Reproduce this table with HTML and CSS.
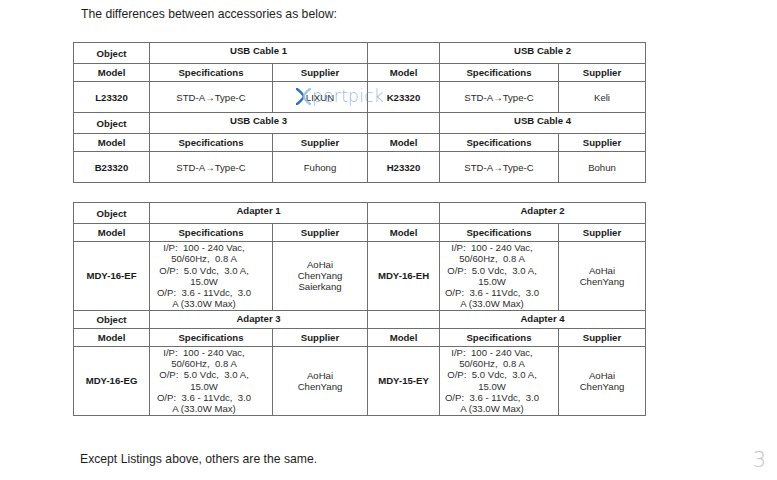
FILE: index.html
```html
<!DOCTYPE html>
<html lang="en">
<head>
<meta charset="utf-8">
<title>Accessories differences</title>
<link rel="stylesheet" href="styles.css">
</head>
<body>
<div class="page">
  <p class="title">The differences between accessories as below:</p>

  <table class="grid cables">
    <colgroup>
      <col class="c1"><col class="c2"><col class="c3"><col class="c4"><col class="c5"><col class="c6">
    </colgroup>
    <tr class="r-obj">
      <td class="b">Object</td><td class="b name" colspan="2">USB Cable 1</td><td></td><td class="b name" colspan="2">USB Cable 2</td>
    </tr>
    <tr class="r-head">
      <td class="b">Model</td><td class="b">Specifications</td><td class="b">Supplier</td><td class="b">Model</td><td class="b">Specifications</td><td class="b">Supplier</td>
    </tr>
    <tr class="r-data">
      <td class="b">L23320</td><td>STD-A→Type-C</td><td>LIXUN</td><td class="b">K23320</td><td>STD-A→Type-C</td><td>Keli</td>
    </tr>
    <tr class="r-obj">
      <td class="b">Object</td><td class="b name" colspan="2">USB Cable 3</td><td></td><td class="b name" colspan="2">USB Cable 4</td>
    </tr>
    <tr class="r-head">
      <td class="b">Model</td><td class="b">Specifications</td><td class="b">Supplier</td><td class="b">Model</td><td class="b">Specifications</td><td class="b">Supplier</td>
    </tr>
    <tr class="r-data">
      <td class="b">B23320</td><td>STD-A→Type-C</td><td>Fuhong</td><td class="b">H23320</td><td>STD-A→Type-C</td><td>Bohun</td>
    </tr>
  </table>

  <table class="grid adapters">
    <colgroup>
      <col class="c1"><col class="c2"><col class="c3"><col class="c4"><col class="c5"><col class="c6">
    </colgroup>
    <tr class="r-obj">
      <td class="b">Object</td><td class="b name" colspan="2">Adapter 1</td><td></td><td class="b name" colspan="2">Adapter 2</td>
    </tr>
    <tr class="r-head">
      <td class="b">Model</td><td class="b">Specifications</td><td class="b">Supplier</td><td class="b">Model</td><td class="b">Specifications</td><td class="b">Supplier</td>
    </tr>
    <tr class="r-spec">
      <td class="b">MDY-16-EF</td>
      <td class="spec">I/P:&nbsp; 100 - 240 Vac,<br>50/60Hz,&nbsp; 0.8 A<br>O/P:&nbsp; 5.0 Vdc,&nbsp; 3.0 A,<br>15.0W<br>O/P:&nbsp; 3.6 - 11Vdc,&nbsp; 3.0<br>A (33.0W Max)</td>
      <td>AoHai<br>ChenYang<br>Saierkang</td>
      <td class="b">MDY-16-EH</td>
      <td class="spec">I/P:&nbsp; 100 - 240 Vac,<br>50/60Hz,&nbsp; 0.8 A<br>O/P:&nbsp; 5.0 Vdc,&nbsp; 3.0 A,<br>15.0W<br>O/P:&nbsp; 3.6 - 11Vdc,&nbsp; 3.0<br>A (33.0W Max)</td>
      <td>AoHai<br>ChenYang</td>
    </tr>
    <tr class="r-obj2">
      <td class="b">Object</td><td class="b name" colspan="2">Adapter 3</td><td></td><td class="b name" colspan="2">Adapter 4</td>
    </tr>
    <tr class="r-head">
      <td class="b">Model</td><td class="b">Specifications</td><td class="b">Supplier</td><td class="b">Model</td><td class="b">Specifications</td><td class="b">Supplier</td>
    </tr>
    <tr class="r-spec2">
      <td class="b">MDY-16-EG</td>
      <td class="spec">I/P:&nbsp; 100 - 240 Vac,<br>50/60Hz,&nbsp; 0.8 A<br>O/P:&nbsp; 5.0 Vdc,&nbsp; 3.0 A,<br>15.0W<br>O/P:&nbsp; 3.6 - 11Vdc,&nbsp; 3.0<br>A (33.0W Max)</td>
      <td>AoHai<br>ChenYang</td>
      <td class="b">MDY-15-EY</td>
      <td class="spec">I/P:&nbsp; 100 - 240 Vac,<br>50/60Hz,&nbsp; 0.8 A<br>O/P:&nbsp; 5.0 Vdc,&nbsp; 3.0 A,<br>15.0W<br>O/P:&nbsp; 3.6 - 11Vdc,&nbsp; 3.0<br>A (33.0W Max)</td>
      <td>AoHai<br>ChenYang</td>
    </tr>
  </table>

  <div class="footer">
    <p class="note">Except Listings above, others are the same.</p>
    <span class="pageno">3</span>
  </div>

  <div class="watermark">
    <svg class="wm-logo" width="15" height="17" viewBox="0 0 15 17">
      <path d="M1 1 C5 4 7 6 7.5 8.5 C7 11 5 13 1 16" fill="none" stroke="#2f6fb6" stroke-width="2.4" stroke-linecap="round"/>
      <path d="M14 1 C10 4 8 6 7.5 8.5 C8 11 10 13 14 16" fill="none" stroke="#8fc0ea" stroke-width="2.4" stroke-linecap="round" opacity="0.85"/>
    </svg>
    <span class="wm-text">pertpick</span>
  </div>
</div>
</body>
</html>
```

FILE: styles.css
```css
html, body {
  margin: 0;
  padding: 0;
  background: #ffffff;
}

.page {
  position: relative;
  width: 777px;
  height: 480px;
  overflow: hidden;
  padding-top: 7px;
  box-sizing: border-box;
  font-family: "Liberation Sans", Arial, sans-serif;
  color: #1e1e1e;
}

.title {
  margin: 0 0 20px 81px;
  font-size: 12.2px;
  line-height: 15px;
}

.grid {
  margin-left: 73px;
  border-collapse: collapse;
  table-layout: fixed;
  width: 573px;
  font-size: 9.6px;
  color: #2a2a2a;
}

.grid + .grid {
  margin-top: 19px;
}

.c1 { width: 76px; }
.c2 { width: 123px; }
.c3 { width: 95px; }
.c4 { width: 72px; }
.c5 { width: 119px; }
.c6 { width: 87px; }

.grid td {
  border: 1px solid #6e6e6e;
  padding: 0 2px;
  text-align: center;
  vertical-align: middle;
  line-height: 11px;
  white-space: nowrap;
}

.grid td.b {
  font-weight: bold;
  color: #1a1a1a;
}

.grid td.name {
  vertical-align: top;
  padding-top: 2px;
}

.r-obj td { height: 18px; }
.r-obj2 td { height: 15px; }
.r-head td { height: 17px; }
.r-data td { height: 30px; }

.r-spec td,
.r-spec2 td {
  height: 66px;
}

.grid td.spec {
  line-height: 11.3px;
  padding: 0 16px 0 2px;
  color: #2e2e2e;
}

.footer {
  display: flex;
  justify-content: space-between;
  align-items: center;
  margin-top: 34px;
  padding: 0 11px 0 80px;
}

.note {
  margin: 0;
  font-size: 12.2px;
  line-height: 15px;
  color: #1e1e1e;
}

.pageno {
  font-family: "DejaVu Sans", sans-serif;
  font-weight: 200;
  font-size: 21px;
  line-height: 20px;
  color: #c4c4c4;
}

.watermark {
  position: absolute;
  left: 296px;
  top: 87px;
  display: flex;
  align-items: center;
  gap: 1px;
  pointer-events: none;
}

.wm-logo {
  display: block;
}

.wm-text {
  font-family: "DejaVu Sans", sans-serif;
  font-weight: 200;
  font-size: 17px;
  line-height: 18px;
  letter-spacing: 0.3px;
  color: rgba(100, 155, 215, 0.7);
}
```
